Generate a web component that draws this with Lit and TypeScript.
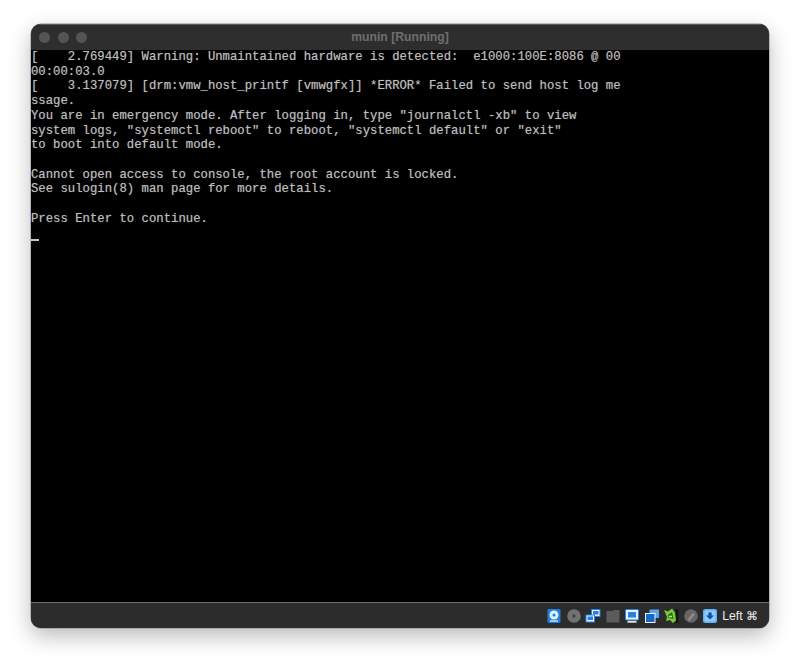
import { LitElement, html, css } from "lit";
import { customElement } from "lit/decorators.js";

const CONSOLE = `[    2.769449] Warning: Unmaintained hardware is detected:  e1000:100E:8086 @ 00
00:00:03.0
[    3.137079] [drm:vmw_host_printf [vmwgfx]] *ERROR* Failed to send host log me
ssage.
You are in emergency mode. After logging in, type "journalctl -xb" to view
system logs, "systemctl reboot" to reboot, "systemctl default" or "exit"
to boot into default mode.

Cannot open access to console, the root account is locked.
See sulogin(8) man page for more details.

Press Enter to continue.
`;

@customElement("app-root")
export class AppRoot extends LitElement {
  static styles = css`
    :host {
      display: block;
      width: 800px;
      height: 666px;
      background: #fff;
      overflow: hidden;
    }
    .page {
      padding: 24px 31px 38px;
      height: 666px;
      box-sizing: border-box;
    }
    .window {
      height: 604px;
      display: flex;
      flex-direction: column;
      border-radius: 10px;
      overflow: hidden;
      background: #2b2b2b;
      box-shadow: 0 0 0 0.5px #8a8a8a, 0 8px 22px rgba(0, 0, 0, 0.28);
    }
    .titlebar {
      height: 26px;
      flex: none;
      display: flex;
      align-items: center;
      position: relative;
      background: #2e2e2e;
      box-shadow: inset 0 1px 0 #5a5a5a;
    }
    .lights {
      display: flex;
      gap: 7.7px;
      padding-left: 8px;
    }
    .lights span {
      width: 11px;
      height: 11px;
      border-radius: 50%;
      background: #545454;
    }
    .title {
      position: absolute;
      inset: 0;
      display: flex;
      align-items: center;
      justify-content: center;
      padding-bottom: 1px;
      font: bold 12.2px "Liberation Sans", Arial, sans-serif;
      color: #6e6e6e;
    }
    .console {
      flex: 1;
      background: #000;
      overflow: hidden;
    }
    pre {
      margin: 0;
      font-family: "Liberation Mono", "DejaVu Sans Mono", monospace;
      font-size: 12.29px;
      line-height: 14.7px;
      color: #bdbdbd;
      text-shadow: 0 0 1px rgba(200, 200, 200, 0.5);
      white-space: pre;
    }
    .cursor {
      width: 8px;
      height: 2px;
      margin-top: 13px;
      background: #c4c4c4;
    }
    .status {
      height: 26px;
      flex: none;
      box-sizing: border-box;
      display: flex;
      align-items: center;
      justify-content: flex-end;
      padding-right: 11px;
      background: #2c2c2c;
      border-top: 1px solid #6c6c6c;
    }
    .icons {
      display: flex;
      gap: 3.5px;
      align-items: center;
      margin-right: 4px;
    }
    svg {
      display: block;
      width: 16px;
      height: 16px;
    }
    .host {
      font: 12.2px "Liberation Sans", Arial, sans-serif;
      color: #ececec;
    }
  `;

  render() {
    return html`
      <div class="page">
        <div class="window">
          <div class="titlebar">
            <div class="lights"><span></span><span></span><span></span></div>
            <div class="title">munin [Running]</div>
          </div>
          <div class="console">
            <pre>${CONSOLE}</pre>
            <div class="cursor"></div>
          </div>
          <div class="status">
            <div class="icons">
              <svg viewBox="0 0 16 16">
                <rect x="1.5" y="1" width="13" height="14" rx="1.5" fill="#1f7fe0" />
                <circle cx="8" cy="7" r="4.5" fill="#dff0ff" />
                <circle cx="8" cy="7" r="1.5" fill="#1f7fe0" />
                <path d="M4 13h8" stroke="#bfe0ff" stroke-width="1.4" />
              </svg>
              <svg viewBox="0 0 16 16">
                <circle cx="8" cy="8" r="6.8" fill="#727272" />
                <circle cx="8" cy="8" r="1.7" fill="#454545" />
              </svg>
              <svg viewBox="0 0 16 16">
                <rect x="6.5" y="1.5" width="8.5" height="7" fill="#e8f2ff" stroke="#2a80e0" />
                <rect x="1" y="7" width="8.5" height="7" fill="#e8f2ff" stroke="#2a80e0" />
                <rect x="2.5" y="8.5" width="5.5" height="3.5" fill="#2a80e0" />
                <rect x="8" y="3" width="5.5" height="3.5" fill="#2a80e0" />
              </svg>
              <svg viewBox="0 0 16 16">
                <path d="M1.5 3h6l1-1h6v12.5h-13z" fill="#5c5c5c" />
              </svg>
              <svg viewBox="0 0 16 16">
                <rect x="1.5" y="1.5" width="13" height="10.5" rx="1" fill="#e6f1fc" stroke="#2a80e0" />
                <rect x="4" y="4" width="8" height="5.5" fill="#2a80e0" />
                <rect x="3.5" y="12.8" width="9" height="2" fill="#dcdcdc" />
              </svg>
              <svg viewBox="0 0 16 16">
                <rect x="5.5" y="1.5" width="9.5" height="8.5" fill="#5aa5ec" />
                <rect x="1.5" y="5.5" width="9.5" height="9" fill="#1668c8" stroke="#e8f2ff" />
              </svg>
              <svg viewBox="0 0 16 16">
                <rect x="12.5" y="1" width="3" height="14" fill="#141414" />
                <path d="M1 2l4 1.5 4-3 3 4 1 8-3 2.5-3-3-4 1 1-4z" fill="#75c93a" />
                <path d="M5 7l4-3 1.5 7-5-1z" fill="#2d6b1a" />
                <path d="M6 8.5h3" stroke="#b5ee7a" stroke-width="1.3" />
              </svg>
              <svg viewBox="0 0 16 16">
                <circle cx="8" cy="8" r="6.8" fill="#666" />
                <path d="M4.5 11.5l5.5-7 2 2-5.5 6.5z" fill="#8a8a8a" />
              </svg>
              <svg viewBox="0 0 16 16">
                <rect x="1" y="1" width="14" height="14" rx="2" fill="#5fb0f5" />
                <rect x="2.5" y="2.5" width="11" height="11" rx="1" fill="#8ccbfa" />
                <path d="M6.4 4.5h3.2v3H12L8 11.5 4 7.5h2.4z" fill="#0f4fa8" />
              </svg>
            </div>
            <span class="host">Left ⌘</span>
          </div>
        </div>
      </div>
    `;
  }
}
